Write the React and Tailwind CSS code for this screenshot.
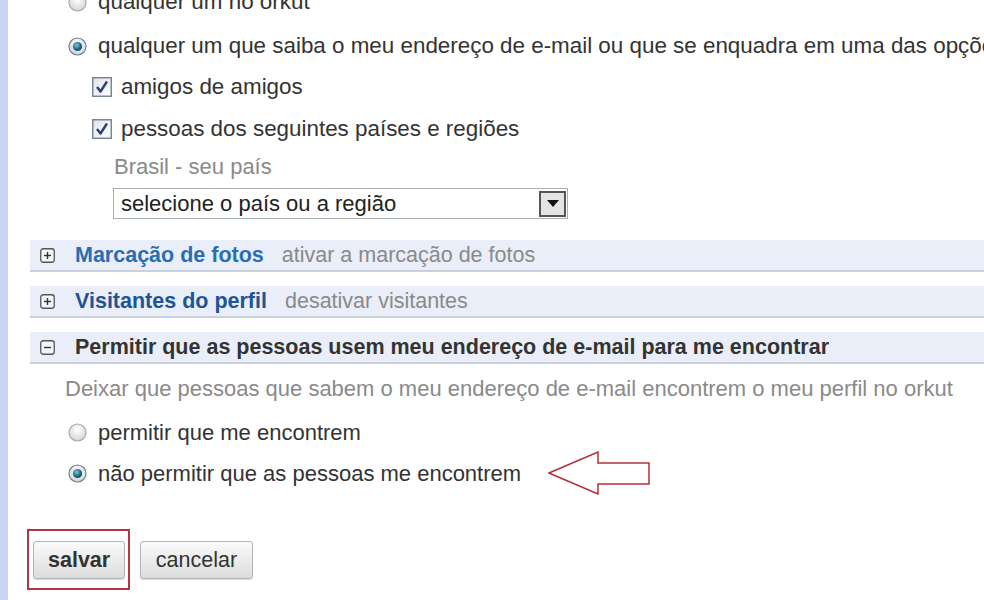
import React from 'react';

function Radio({ checked }) {
  return (
    <svg width="19" height="19" viewBox="0 0 19 19" className="shrink-0">
      <defs>
        <radialGradient id={checked ? 'rOn' : 'rOff'} cx="50%" cy="35%" r="65%">
          <stop offset="0%" stopColor="#ffffff" />
          <stop offset="100%" stopColor="#d4d4d4" />
        </radialGradient>
        <radialGradient id="dot" cx="40%" cy="35%" r="70%">
          <stop offset="0%" stopColor="#7fc4de" />
          <stop offset="60%" stopColor="#1f6f8f" />
          <stop offset="100%" stopColor="#0d3f55" />
        </radialGradient>
      </defs>
      <circle cx="9.5" cy="9.5" r="8.5" fill={`url(#${checked ? 'rOn' : 'rOff'})`} stroke={checked ? '#6d7f93' : '#a9a9a9'} strokeWidth="1.2" />
      {checked && <circle cx="9.5" cy="9.5" r="4.6" fill="url(#dot)" />}
    </svg>
  );
}

function Checkbox() {
  return (
    <svg width="20" height="20" viewBox="0 0 20 20" className="shrink-0">
      <defs>
        <linearGradient id="cb" x1="0" y1="0" x2="1" y2="1">
          <stop offset="0%" stopColor="#dfe3ea" />
          <stop offset="100%" stopColor="#ffffff" />
        </linearGradient>
      </defs>
      <rect x="0.75" y="0.75" width="18.5" height="18.5" fill="url(#cb)" stroke="#7b8894" strokeWidth="1.5" />
      <path d="M5 10 L8.5 14.5 L15 4.5" fill="none" stroke="#2d3f78" strokeWidth="2.4" strokeLinejoin="round" />
    </svg>
  );
}

function Toggle({ open }) {
  return (
    <svg width="15" height="15" viewBox="0 0 15 15" className="shrink-0">
      <rect x="0.75" y="0.75" width="13.5" height="13.5" rx="2.5" fill="#f4f6fa" stroke="#555" strokeWidth="1.3" />
      <path d="M4 7.5 H11" stroke="#333" strokeWidth="1.4" />
      {!open && <path d="M7.5 4 V11" stroke="#333" strokeWidth="1.4" />}
    </svg>
  );
}

function Arrow() {
  return (
    <svg width="102" height="44" viewBox="0 0 102 44" className="shrink-0 ml-[16px]">
      <path
        d="M1 22 L50 1 L50 12 L101 12 L101 33 L50 33 L50 43 Z"
        fill="none"
        stroke="#b3303a"
        strokeWidth="1.5"
        strokeLinejoin="miter"
      />
    </svg>
  );
}

function SectionHeader({ open, title, sub, titleColor }) {
  return (
    <div className="h-[32px] ml-[22px] bg-[#e9eef8] border-b-2 border-[#c9d1df] flex items-center pl-[10px] gap-[20px] whitespace-nowrap">
      <Toggle open={open} />
      <div className="flex items-center gap-[18px] text-[21.5px]">
        <span className={`font-bold ${titleColor}`}>{title}</span>
        {sub && <span className="text-[#8a8a8a]">{sub}</span>}
      </div>
    </div>
  );
}

function Button({ children, bold }) {
  return (
    <button
      className={`h-[38px] px-[14px] rounded-[3px] border border-[#b4b4b4] bg-gradient-to-b from-[#fbfbfb] to-[#dcdcdc] text-[21.5px] text-[#333] shadow-[0_1px_1px_rgba(0,0,0,0.15)] ${bold ? 'font-bold w-[92px]' : 'w-[113px]'}`}
    >
      {children}
    </button>
  );
}

export default function App() {
  return (
    <div className="w-[984px] h-[600px] overflow-hidden bg-white flex text-[#333]" style={{ fontFamily: '"Liberation Sans", Arial, sans-serif' }}>
      <div className="w-[8px] shrink-0 bg-[#c6d5f4]" />
      <div className="flex-1 min-w-0 overflow-hidden">
        <div className="-mt-[19px] h-[42px] pl-[60px] flex items-center gap-[11px] text-[22.4px] whitespace-nowrap">
          <Radio />
          <span>qualquer um no orkut</span>
        </div>
        <div className="h-[46px] pl-[60px] flex items-center gap-[11px] text-[22.4px] whitespace-nowrap">
          <Radio checked />
          <span>qualquer um que saiba o meu endereço de e-mail ou que se enquadra em uma das opções abaixo</span>
        </div>
        <div className="h-[36px] pl-[84px] flex items-center gap-[9px] text-[22.4px] whitespace-nowrap">
          <Checkbox />
          <span>amigos de amigos</span>
        </div>
        <div className="h-[48px] pl-[84px] flex items-center gap-[9px] text-[22.4px] whitespace-nowrap">
          <Checkbox />
          <span>pessoas dos seguintes países e regiões</span>
        </div>
        <div className="h-[26px] pl-[106px] flex items-center text-[22px] text-[#8a8a8a]">
          Brasil - seu país
        </div>
        <div className="mt-[9px] ml-[105px] w-[455px] h-[31px] border border-[#a9afb7] bg-white flex items-center justify-between pl-[7px] pr-[1px]">
          <span className="text-[22px] text-[#222]">selecione o país ou a região</span>
          <div className="w-[27px] h-[26px] border-2 border-[#555] bg-[#e4e4e4] flex items-center justify-center">
            <svg width="12" height="8" viewBox="0 0 12 8">
              <path d="M0 0 H12 L6 7 Z" fill="#111" />
            </svg>
          </div>
        </div>
        <div className="mt-[21px]">
          <SectionHeader title="Marcação de fotos" sub="ativar a marcação de fotos" titleColor="text-[#2a6db5]" />
        </div>
        <div className="mt-[14px]">
          <SectionHeader title="Visitantes do perfil" sub="desativar visitantes" titleColor="text-[#1d5596]" />
        </div>
        <div className="mt-[14px]">
          <SectionHeader open title="Permitir que as pessoas usem meu endereço de e-mail para me encontrar" titleColor="text-[#333]" />
        </div>
        <div className="h-[48px] pl-[57px] flex items-center text-[22px] text-[#8a8a8a] whitespace-nowrap">
          Deixar que pessoas que sabem o meu endereço de e-mail encontrem o meu perfil no orkut
        </div>
        <div className="h-[40px] pl-[60px] flex items-center gap-[11px] text-[22px] whitespace-nowrap">
          <Radio />
          <span>permitir que me encontrem</span>
        </div>
        <div className="h-[42px] pl-[60px] flex items-center gap-[11px] text-[22px] whitespace-nowrap">
          <Radio checked />
          <span>não permitir que as pessoas me encontrem</span>
          <Arrow />
        </div>
        <div className="mt-[35px] ml-[19px] flex items-start gap-[10px]">
          <div className="border-2 border-[#b2383d] pt-[10px] pb-[9px] pl-[4px] pr-[3px]">
            <Button bold>salvar</Button>
          </div>
          <div className="pt-[12px]">
            <Button>cancelar</Button>
          </div>
        </div>
      </div>
    </div>
  );
}
